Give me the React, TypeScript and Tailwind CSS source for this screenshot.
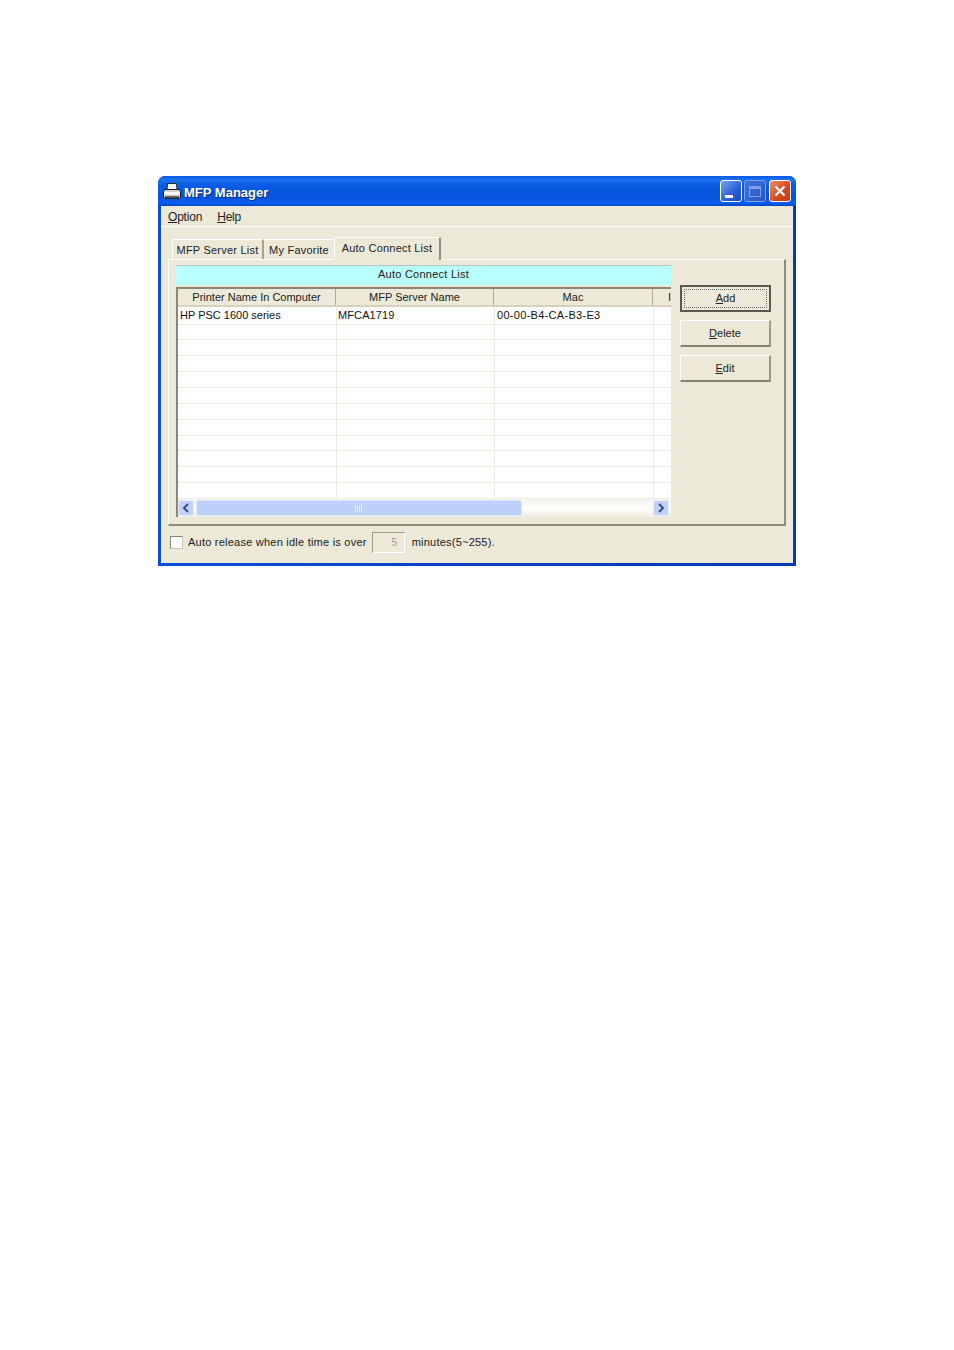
const sans = "font-['Liberation_Sans',Arial,sans-serif]";

const rows = [
  ["HP PSC 1600 series", "MFCA1719", "00-00-B4-CA-B3-E3"],
  ["", "", ""],
  ["", "", ""],
  ["", "", ""],
  ["", "", ""],
  ["", "", ""],
  ["", "", ""],
  ["", "", ""],
  ["", "", ""],
  ["", "", ""],
  ["", "", ""],
  ["", "", ""],
];

function PrinterIcon() {
  return (
    <svg width="18" height="18" viewBox="0 0 18 18">
      <path d="M4.5 1.5h9l.5 6H4z" fill="#f2f2f2" stroke="#2a2a2a" strokeWidth="1" />
      <path d="M2 7.5h14l1.5 2v5.5l-1.5 1.5H2L.5 15V9.5z" fill="#d2d2d2" stroke="#1c1c1c" strokeWidth="1" />
      <rect x="1.5" y="10" width="15" height="2.5" fill="#fafafa" />
      <rect x="2" y="14" width="14" height="2" fill="#5a5a5a" />
    </svg>
  );
}

function Underlined({ first, rest }: { first: string; rest: string }) {
  return (
    <span>
      <span className="underline underline-offset-1">{first}</span>
      {rest}
    </span>
  );
}

function CaptionButton({ kind }: { kind: "min" | "max" | "close" }) {
  if (kind === "close") {
    return (
      <div className="w-[22px] h-[22px] ml-[3px] rounded-[3px] border border-white bg-[linear-gradient(135deg,#e8906f,#d5481f_60%,#c23a12)] flex items-center justify-center">
        <svg width="14" height="14" viewBox="0 0 14 14">
          <path d="M2.5 2.5l9 9M11.5 2.5l-9 9" stroke="#fff" strokeWidth="2.2" />
        </svg>
      </div>
    );
  }
  return (
    <div
      className={`w-[22px] h-[22px] rounded-[3px] border flex items-center justify-center ${
        kind === "min"
          ? "border-white bg-[linear-gradient(135deg,#7aa2f0,#2a5fd8_60%,#1c49bb)]"
          : "ml-[2px] border-[#7f9fe6] bg-[linear-gradient(135deg,#3f74de,#2f62cf_60%,#2855bf)]"
      }`}
    >
      {kind === "min" ? (
        <div className="w-[8px] h-[3px] bg-white mt-[10px] mr-[5px]" />
      ) : (
        <div className="w-[12px] h-[11px] border border-[#7f9fe6] border-t-[3px]" />
      )}
    </div>
  );
}

function SideButton({ first, rest, focused }: { first: string; rest: string; focused?: boolean }) {
  return (
    <div
      className={`w-[91px] h-[27px] flex items-center justify-center text-[11px] text-[#222] bg-[#ece9d8] ${
        focused
          ? "border-2 border-[#5a5a52]"
          : "border border-t-white border-l-white border-r-[#9d9a8a] border-b-[#85826f] border-b-2 border-r-2"
      }`}
    >
      {focused ? (
        <div className="w-[83px] h-[19px] border border-dotted border-[#666] flex items-center justify-center">
          <Underlined first={first} rest={rest} />
        </div>
      ) : (
        <Underlined first={first} rest={rest} />
      )}
    </div>
  );
}

export default function App() {
  return (
    <div className={`min-h-[1350px] bg-white pl-[158px] pt-[176px] ${sans}`}>
      <div className="w-[638px] h-[390px] flex flex-col rounded-t-[7px] overflow-hidden bg-[linear-gradient(90deg,#0a4fd8,#0a3fc4_50%,#0a37b4)]">
        {/* title bar */}
        <div className="h-[30px] shrink-0 flex items-center pl-[5px] pr-[5px] bg-[linear-gradient(180deg,#0a58dc_0%,#1a72f0_12%,#0a5ce4_30%,#0453da_70%,#0a5ff0_90%,#0044c4_100%)]">
          <PrinterIcon />
          <span className="ml-[3px] pt-[3px] text-[13px] font-bold text-white [text-shadow:1px_1px_0_#0a2a80]">
            MFP Manager
          </span>
          <div className="ml-auto flex">
            <CaptionButton kind="min" />
            <CaptionButton kind="max" />
            <CaptionButton kind="close" />
          </div>
        </div>

        {/* client area */}
        <div className="flex-1 mx-[3px] mb-[3px] bg-[#ece9d8] flex flex-col text-[11px] text-[#222]">
          {/* menu */}
          <div className="h-[21px] shrink-0 flex items-center gap-[15px] pl-[7px] pt-[2px] border-b border-white text-[12px] tracking-[-0.2px]">
            <Underlined first="O" rest="ption" />
            <Underlined first="H" rest="elp" />
          </div>

          {/* tabs */}
          <div className="h-[32px] shrink-0 flex items-end pl-[11px] tracking-[0.22px]">
            <div className="h-[20px] w-[92px] pt-[2px] flex items-center justify-center border-t border-l border-white border-r-2 border-r-[#a5a294] rounded-t-[2px]">
              MFP Server List
            </div>
            <div className="h-[20px] w-[70px] pt-[2px] flex items-center justify-center border-t border-white">
              My Favorite
            </div>
            <div className="h-[23px] w-[107px] pb-[2px] flex items-center justify-center border-t border-l border-white border-r-2 border-r-[#8f8c7d] rounded-t-[2px] relative top-[1px] bg-[#ece9d8] z-10">
              Auto Connect List
            </div>
          </div>

          {/* tab panel */}
          <div className="ml-[7px] w-[618px] h-[267px] shrink-0 border-t border-l border-white border-r-2 border-r-[#8f8c7d] border-b-2 border-b-[#8f8c7d] flex pl-[7px] pt-[5px]">
            <div className="w-[495px] h-[252px] shrink-0 flex flex-col">
              <div className="h-[20px] shrink-0 pb-[2px] bg-[#b9ffff] border-t border-[#b8c4c0] flex items-center justify-center tracking-[0.25px]">
                Auto Connect List
              </div>

              {/* list */}
              <div className="mt-[2px] flex-1 flex flex-col border-l-2 border-t-2 border-[#8a8778] bg-white overflow-hidden">
                <div className="h-[18px] shrink-0 flex bg-[#ece9d8] border-b-2 border-[#d6d2bd]">
                  <div className="w-[158px] shrink-0 flex items-center justify-center border-r border-[#aca899]">
                    Printer Name In Computer
                  </div>
                  <div className="w-[158px] shrink-0 flex items-center justify-center border-r border-[#aca899]">
                    MFP Server Name
                  </div>
                  <div className="w-[159px] shrink-0 flex items-center justify-center border-r border-[#aca899]">
                    Mac
                  </div>
                  <div className="flex-1 pl-[15px] flex items-center text-[#222]">I</div>
                </div>
                <div className="flex-1 flex flex-col">
                  {rows.map((row, i) => (
                    <div key={i} className={`flex flex-1 border-b border-[#efecdf] ${i === 0 ? "text-[#111]" : ""}`}>
                      <div className="w-[159px] shrink-0 pl-[2px] flex items-center border-r border-[#efecdf]">{row[0]}</div>
                      <div className="w-[158px] shrink-0 pl-[1px] flex items-center border-r border-[#efecdf] tracking-[0.1px]">{row[1]}</div>
                      <div className="w-[159px] shrink-0 pl-[2px] flex items-center border-r border-[#efecdf] tracking-[0.3px]">{row[2]}</div>
                      <div className="flex-1" />
                    </div>
                  ))}
                </div>
                {/* horizontal scrollbar */}
                <div className="h-[18px] shrink-0 flex items-center gap-[1px] pr-[2px] bg-[linear-gradient(180deg,#f4f3ee,#fdfdfb_50%,#f1efe4)]">
                  <div className="w-[16px] h-[16px] shrink-0 rounded-[2px] bg-[#c2d2f7] border border-[#e5ecfc] flex items-center justify-center">
                    <svg width="8" height="10" viewBox="0 0 8 10">
                      <path d="M6 1L2 5l4 4" fill="none" stroke="#3a4d80" strokeWidth="2" />
                    </svg>
                  </div>
                  <div className="w-[326px] h-[16px] ml-[1px] shrink-0 rounded-[2px] bg-[#bcd0f9] border border-[#dce6fb] flex items-center justify-center">
                    <svg width="8" height="7" viewBox="0 0 8 7">
                      <path d="M.5 0v7M2.5 0v7M4.5 0v7M6.5 0v7" stroke="#e6eefd" strokeWidth="1" />
                    </svg>
                  </div>
                  <div className="flex-1" />
                  <div className="w-[16px] h-[16px] shrink-0 rounded-[2px] bg-[#c2d2f7] border border-[#e5ecfc] flex items-center justify-center">
                    <svg width="8" height="10" viewBox="0 0 8 10">
                      <path d="M2 1l4 4-4 4" fill="none" stroke="#3a4d80" strokeWidth="2" />
                    </svg>
                  </div>
                </div>
              </div>
            </div>

            {/* action buttons */}
            <div className="ml-[9px] pt-[20px] flex flex-col gap-[8px]">
              <SideButton first="A" rest="dd" focused />
              <SideButton first="D" rest="elete" />
              <SideButton first="E" rest="dit" />
            </div>
          </div>

          {/* idle row */}
          <div className="mt-[6px] ml-[9px] flex items-center tracking-[0.23px]">
            <div className="w-[13px] h-[13px] bg-white border border-[#8a8778] border-b-[#c8c5b4] border-r-[#c8c5b4]" />
            <span className="ml-[5px]">Auto release when idle time is over</span>
            <div className="ml-[5px] w-[33px] h-[21px] pr-[6px] bg-[#ece9d8] border border-[#9d9a8a] border-r-white border-b-white flex items-center justify-end text-[#a8a698]">
              5
            </div>
            <span className="ml-[7px]">minutes(5~255).</span>
          </div>
        </div>
      </div>
    </div>
  );
}
